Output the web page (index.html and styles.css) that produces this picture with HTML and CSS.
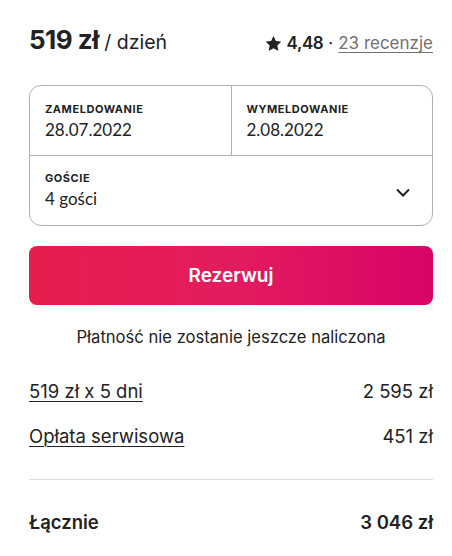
FILE: index.html
```html
<!DOCTYPE html>
<html lang="pl">
<head>
<meta charset="utf-8">
<link rel="stylesheet" href="styles.css">
</head>
<body>
<div class="card">
  <div class="head">
    <div class="price"><span class="amount">519 zł</span><span class="per"> / dzień</span></div>
    <div class="rating">
      <svg class="star" viewBox="0 0 32 32" width="15" height="15"><path d="M15.1 1.58l-4.13 8.88-9.86 1.27a1 1 0 0 0-.54 1.74l7.3 6.57-1.970 9.85a1 1 0 0 0 1.48 1.06l8.62-5 8.63 5a1 1 0 0 0 1.48-1.06l-1.97-9.85 7.3-6.57a1 1 0 0 0-.55-1.73l-9.86-1.28-4.12-8.88a1 1 0 0 0-1.82 0z" fill="#222"/></svg>
      <span class="score">4,48</span><span class="dot">·</span><span class="reviews">23 recenzje</span>
    </div>
  </div>

  <div class="picker">
    <div class="dates">
      <div class="field">
        <div class="label">ZAMELDOWANIE</div>
        <div class="value">28.07.2022</div>
      </div>
      <div class="field right">
        <div class="label">WYMELDOWANIE</div>
        <div class="value">2.08.2022</div>
      </div>
    </div>
    <div class="guests">
      <div class="field">
        <div class="label">GOŚCIE</div>
        <div class="value">4 gości</div>
      </div>
      <svg class="chev" viewBox="0 0 32 32" width="16" height="16"><path d="M4 11l12 12 12-12" fill="none" stroke="#222" stroke-width="4"/></svg>
    </div>
  </div>

  <div class="btn">Rezerwuj</div>
  <p class="note">Płatność nie zostanie jeszcze naliczona</p>

  <div class="row first"><span class="u">519 zł x 5 dni</span><span>2 595 zł</span></div>
  <div class="row"><span class="u">Opłata serwisowa</span><span>451 zł</span></div>
  <div class="divider"></div>
  <div class="row total"><span>Łącznie</span><span>3 046 zł</span></div>
</div>
</body>
</html>
```

FILE: styles.css
```css
html, body {
  margin: 0;
  background: #fff;
}
body {
  font-family: Inter, "Noto Sans", sans-serif;
  color: #222222;
}
.card {
  padding: 24px 19px 0 29px;
}
.head {
  display: flex;
  justify-content: space-between;
  align-items: baseline;
}
.amount {
  font-size: 26px;
  font-weight: 700;
  letter-spacing: -0.5px;
}
.per {
  font-size: 19.5px;
  font-weight: 400;
}
.rating {
  display: flex;
  align-items: baseline;
  font-size: 17px;
}
.star {
  align-self: center;
  margin-right: 6px;
}
.score {
  font-weight: 600;
  letter-spacing: -0.4px;
}
.dot {
  margin: 0 5px;
  color: #222;
}
.reviews {
  color: #717171;
  text-decoration: underline;
  text-underline-offset: 3px;
}
.picker {
  margin-top: 30px;
  border: 1px solid #b0b0b0;
  border-radius: 12px;
  font-family: Lato, "Noto Sans", sans-serif;
}
.dates {
  display: flex;
  border-bottom: 1px solid #b0b0b0;
  height: 69px;
}
.dates .field {
  flex: 1;
  padding: 16px 15px 0;
}
.dates .right {
  border-left: 1px solid #b0b0b0;
}
.label {
  font-family: Inter, "Noto Sans", sans-serif;
  font-size: 11px;
  font-weight: 700;
  letter-spacing: 0.55px;
}
.value {
  font-size: 17px;
  margin-top: 3px;
}
.guests {
  display: flex;
  align-items: center;
  justify-content: space-between;
  height: 69px;
  padding: 0 21px 0 15px;
}
.guests .field {
  padding-bottom: 2px;
}
.chev {
  margin-top: 2px;
}
.btn {
  margin-top: 20px;
  height: 59px;
  border-radius: 8px;
  background: linear-gradient(to right, #e61e4d 0%, #e31c5f 50%, #d70466 100%);
  color: #fff;
  font-size: 19px;
  font-weight: 600;
  display: flex;
  align-items: center;
  justify-content: center;
}
.note {
  margin: 20px 0 0;
  text-align: center;
  font-size: 16.6px;
  line-height: 24px;
  font-weight: 400;
}
.row {
  display: flex;
  justify-content: space-between;
  font-size: 18.5px;
  font-weight: 400;
  margin-top: 21px;
  line-height: 24px;
}
.row.first {
  margin-top: 30px;
}
.u {
  text-decoration: underline;
  text-decoration-thickness: 1px;
  text-underline-offset: 3px;
}
.divider {
  border-top: 1px solid #dddddd;
  margin-top: 31px;
}
.row.total {
  margin-top: 30px;
  font-weight: 600;
}
```
